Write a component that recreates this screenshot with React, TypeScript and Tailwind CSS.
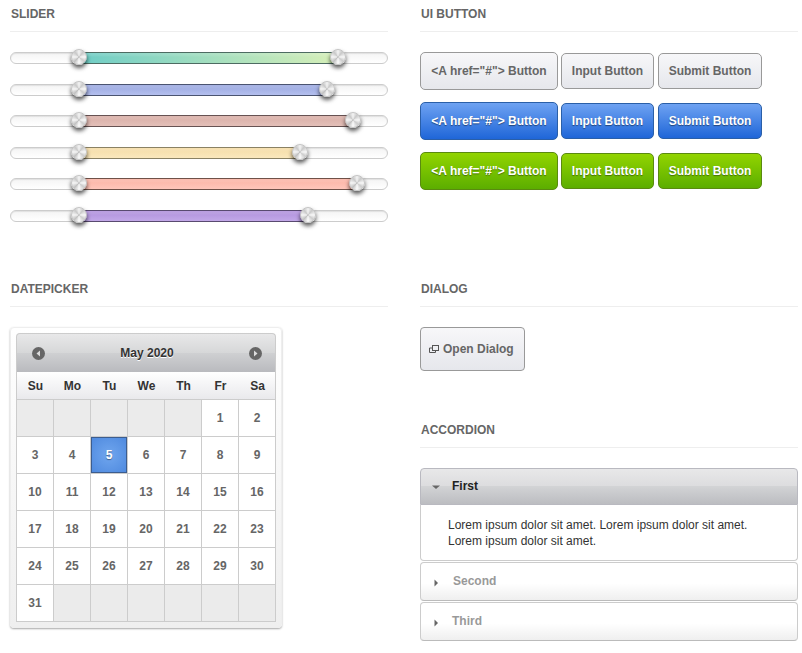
const sliders = [
  { w: "w-[259px]", range: "bg-[linear-gradient(90deg,#6fcdc6,#d6efb8)] border-[#4d6b62]" },
  { w: "w-[248px]", range: "bg-[linear-gradient(180deg,#9aa8e0,#b4bfee)] border-[#4b5470]" },
  { w: "w-[274px]", range: "bg-[linear-gradient(180deg,#d8aea6,#e3bfb8)] border-[#665252]" },
  { w: "w-[221px]", range: "bg-[linear-gradient(180deg,#f5dca6,#fae8bd)] border-[#8a8163]" },
  { w: "w-[278px]", range: "bg-[linear-gradient(180deg,#fbb3a4,#ffc6ba)] border-[#6f5148]" },
  { w: "w-[229px]", range: "bg-[linear-gradient(180deg,#b090dc,#c2a8e8)] border-[#594a70]" },
];

const btnBase =
  "flex items-center justify-center rounded-[5px] border text-[12px] font-bold whitespace-nowrap";
const themes = [
  "border-[#999] text-[#666] bg-[linear-gradient(180deg,#f7f7f9,#e6e7ec)]",
  "border-[#2a5fa8] text-white bg-[linear-gradient(180deg,#6ea2f2,#1f66d8)] [text-shadow:0_1px_1px_rgba(0,0,0,0.45)]",
  "border-[#5a8a10] text-white bg-[linear-gradient(180deg,#92d400,#5cae00)] [text-shadow:0_1px_1px_rgba(0,0,0,0.4)]",
];

const Header = ({ children }: { children: string }) => (
  <div className="h-[32px] pl-px border-b border-[#eeeeee] text-[12px] font-bold text-[#666] leading-[28px]">
    {children}
  </div>
);

const Nav = ({ dir }: { dir: "l" | "r" }) => (
  <svg width="13" height="13" viewBox="0 0 13 13">
    <circle cx="6.5" cy="6.5" r="6.5" fill="#666" />
    <path d={dir === "l" ? "M8 3.5 L4.5 6.5 L8 9.5 Z" : "M5 3.5 L8.5 6.5 L5 9.5 Z"} fill="#ddd" />
  </svg>
);

const Handle = ({ pos }: { pos: string }) => (
  <div
    className={`absolute top-[-4px] w-[16px] h-[16px] rounded-full border border-[#c4c4c4] bg-[conic-gradient(#f4f4f4_0deg,#c8c8c8_40deg,#f8f8f8_90deg,#cccccc_130deg,#fcfcfc_180deg,#c2c2c2_225deg,#f6f6f6_270deg,#c8c8c8_320deg,#f4f4f4_360deg)] shadow-[0_3px_4px_rgba(0,0,0,0.65)] ${pos}`}
  />
);

const Slider = ({ w, range }: { w: string; range: string }) => (
  <div className="relative h-[12px] rounded-full border border-[#ccc] bg-[linear-gradient(180deg,#f4f4f4,#ffffff)] shadow-[inset_0_1px_1px_rgba(0,0,0,0.08)]">
    <div
      className={`absolute left-[68px] top-[-1px] h-[12px] border-y shadow-[inset_0_3px_2px_rgba(255,255,255,0.12)] ${w} ${range}`}
    >
      <Handle pos="left-[-8px]" />
      <Handle pos="right-[-8px]" />
    </div>
  </div>
);

const weeks: (number | null)[] = [
  null, null, null, null, null, 1, 2,
  3, 4, 5, 6, 7, 8, 9,
  10, 11, 12, 13, 14, 15, 16,
  17, 18, 19, 20, 21, 22, 23,
  24, 25, 26, 27, 28, 29, 30,
  31, null, null, null, null, null, null,
];

const Calendar = () => (
  <div className="mt-[20px] w-[272px] h-[301px] rounded-[4px] border border-[#eeeeee] bg-[linear-gradient(180deg,#ffffff,#efefef)] shadow-[0_1px_2px_rgba(0,0,0,0.35)] p-[5px]">
    <div className="flex items-center justify-between h-[39px] pl-[15px] pr-[13px] rounded-t-[4px] border border-b-0 border-[#ccc] bg-[linear-gradient(180deg,#e8e8e9_0%,#d6d7d8_50%,#cfd0d2_50%,#b9babe_100%)]">
      <Nav dir="l" />
      <span className="text-[12px] font-bold text-[#333] [text-shadow:0_1px_0_#fff]">May 2020</span>
      <Nav dir="r" />
    </div>
    <div className="grid grid-cols-[repeat(7,37px)] w-[260px] h-[28px] border-x border-b border-[#ccc] bg-[linear-gradient(180deg,#ffffff,#e9e9ec)]">
      {["Su", "Mo", "Tu", "We", "Th", "Fr", "Sa"].map((d) => (
        <div key={d} className="flex items-center justify-center text-[12px] font-bold text-[#333]">
          {d}
        </div>
      ))}
    </div>
    <div className="grid grid-cols-[repeat(7,37px)] auto-rows-[37px] w-[260px] border-l border-[#ccc]">
      {weeks.map((d, i) => (
        <div
          key={i}
          className={`flex items-center justify-center text-[12px] font-bold text-[#666] border-r border-b border-[#ccc] ${
            d === null ? "bg-[#ebebeb]" : "bg-white"
          }`}
        >
          {d === 5 ? (
            <div className="flex items-center justify-center w-full h-full text-white border border-[#3c5d8f] bg-[radial-gradient(circle,#70a6ee,#4f8adf)] [text-shadow:0_1px_1px_rgba(0,0,0,0.4)]">
              5
            </div>
          ) : (
            d
          )}
        </div>
      ))}
    </div>
  </div>
);

const Caret = ({ open }: { open?: boolean }) => (
  <svg width="8" height="8" viewBox="0 0 8 8" className={open ? "shrink-0 mt-[2px]" : "shrink-0 mt-[3px]"}>
    <path d={open ? "M0 2.5 H8 L4 6 Z" : "M2.5 0.5 L6 4 L2.5 7.5 Z"} fill="#666" />
  </svg>
);

export default function App() {
  return (
    <div
      className="flex gap-[32px] pl-[10px] w-[802px] h-[653px] overflow-hidden bg-white"
      style={{ fontFamily: '"Liberation Sans", Arial, sans-serif' }}
    >
      <div className="w-[378px] shrink-0">
        <Header>SLIDER</Header>
        <div className="flex flex-col gap-[19.5px] mt-[20px]">
          {sliders.map((s, i) => (
            <Slider key={i} w={s.w} range={s.range} />
          ))}
        </div>
        <div className="mt-[53.5px]">
          <Header>DATEPICKER</Header>
        </div>
        <Calendar />
      </div>
      <div className="w-[378px] shrink-0">
        <Header>UI BUTTON</Header>
        <div className="flex flex-col gap-[12px] mt-[20px]">
          {themes.map((t, i) => (
            <div key={i} className="flex items-center">
              <a className={`${btnBase} ${t} w-[138px] h-[38px] mr-[3px]`}>{'<A href="#"> Button'}</a>
              <div className={`${btnBase} ${t} w-[93px] h-[36px] mr-[4px]`}>Input Button</div>
              <div className={`${btnBase} ${t} w-[104px] h-[36px]`}>Submit Button</div>
            </div>
          ))}
        </div>
        <div className="mt-[85px]">
          <Header>DIALOG</Header>
        </div>
        <div className="mt-[20px] flex items-center gap-[4px] w-[105px] h-[44px] rounded-[4px] border border-[#999] text-[12px] font-bold text-[#666] pl-[8px] bg-[linear-gradient(180deg,#f7f7f9,#e6e7ec)]">
          <svg width="10" height="8" viewBox="0 0 10 8" fill="none" stroke="#555">
            <rect x="3.5" y="0.5" width="6" height="5" />
            <path d="M3 3 H0.5 V7.5 H6.5 V6" />
          </svg>
          Open Dialog
        </div>
        <div className="mt-[45px]">
          <Header>ACCORDION</Header>
        </div>
        <div className="mt-[20px] flex flex-col">
          <div className="flex items-center h-[37px] pl-[11px] pb-[2px] gap-[12px] rounded-t-[4px] border border-[#b9b9c0] text-[12px] font-bold text-[#222] bg-[linear-gradient(180deg,#e8e8e9_0%,#dcdcde_50%,#d2d3d5_50%,#bcbdc1_100%)]">
            <Caret open />
            First
          </div>
          <div className="h-[56px] rounded-b-[4px] border border-t-0 border-[#ccc] pl-[27px] pr-[20px] pt-[12px] text-[12px] leading-[16px] text-[#333]">
            Lorem ipsum dolor sit amet. Lorem ipsum dolor sit amet. Lorem ipsum dolor sit amet.
          </div>
          <div className="mt-[1px] flex items-center h-[39px] pl-[11px] pb-[1px] gap-[13px] rounded-[4px] border border-[#ccc] border-b-[#bbb] text-[12px] font-bold text-[#999] bg-[linear-gradient(180deg,#ffffff_55%,#efefef)]">
            <Caret />
            Second
          </div>
          <div className="mt-[1px] flex items-center h-[39px] pl-[11px] pb-[1px] gap-[12px] rounded-[4px] border border-[#ccc] border-b-[#bbb] text-[12px] font-bold text-[#999] bg-[linear-gradient(180deg,#ffffff_55%,#efefef)]">
            <Caret />
            Third
          </div>
        </div>
      </div>
    </div>
  );
}
